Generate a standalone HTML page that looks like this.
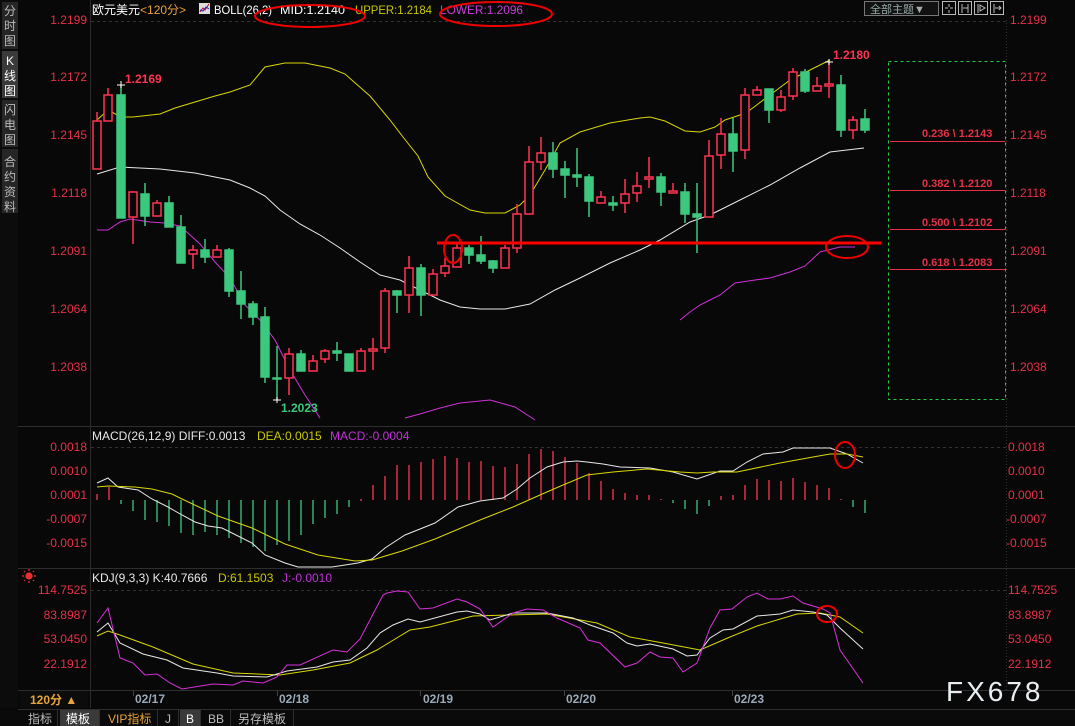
<!DOCTYPE html>
<html><head><meta charset="utf-8"><style>
html,body{margin:0;padding:0;background:#080808;}
svg{display:block;font-family:"Liberation Sans","Noto Sans CJK SC",sans-serif;}
</style></head><body>
<svg width="1075" height="726" viewBox="0 0 1075 726" xmlns="http://www.w3.org/2000/svg">
<rect width="1075" height="726" fill="#080808"/>
<!-- left sidebar -->
<rect x="0" y="0" width="18" height="708" fill="#0c0c0c"/>
<rect x="2" y="2" width="16" height="47" fill="#262626"/>
<rect x="2" y="51" width="16" height="47" fill="#3a3a3a"/>
<rect x="2" y="100" width="16" height="47" fill="#262626"/>
<rect x="2" y="149" width="16" height="64" fill="#262626"/>
<g fill="#bbbbbb" font-size="12" text-anchor="middle">
<text x="10" y="15">分</text><text x="10" y="30">时</text><text x="10" y="45">图</text>
<text x="10" y="65" fill="#ffffff">K</text><text x="10" y="80" fill="#ffffff">线</text><text x="10" y="95" fill="#ffffff">图</text>
<text x="10" y="114">闪</text><text x="10" y="129">电</text><text x="10" y="144">图</text>
<text x="10" y="166">合</text><text x="10" y="181">约</text><text x="10" y="196">资</text><text x="10" y="211">料</text>
</g>
<!-- frame lines -->
<line x1="90.5" y1="0" x2="90.5" y2="708" stroke="#2a2a2a"/>
<line x1="1006.5" y1="20" x2="1006.5" y2="690" stroke="#333" stroke-dasharray="1,2"/>
<line x1="18" y1="426.5" x2="1075" y2="426.5" stroke="#2e2e2e"/>
<line x1="18" y1="568.5" x2="1075" y2="568.5" stroke="#2e2e2e"/>
<line x1="18" y1="690.5" x2="1075" y2="690.5" stroke="#2e2e2e"/>
<line x1="18" y1="709.5" x2="1075" y2="709.5" stroke="#2e2e2e"/>
<line x1="91" y1="21.5" x2="1006" y2="21.5" stroke="#333" stroke-dasharray="3,3"/>
<line x1="91" y1="447.5" x2="1006" y2="447.5" stroke="#333" stroke-dasharray="3,3"/>
<line x1="91" y1="590.5" x2="1006" y2="590.5" stroke="#333" stroke-dasharray="3,3"/>

<!-- header -->
<g font-size="12">
<text x="92" y="14" fill="#ffffff">欧元美元<tspan fill="#e8a33a">&lt;120分&gt;</tspan></text>
<rect x="199" y="3" width="11" height="11" fill="#dddddd"/><polyline points="200,12 203,8 205,10 209,4" stroke="#c00" fill="none"/><polyline points="200,10 203,11 206,7 209,9" stroke="#22c" fill="none"/>
<text x="214" y="14" fill="#ffffff" textLength="58" lengthAdjust="spacingAndGlyphs">BOLL(26,2)</text>
<text x="280" y="14" fill="#ffffff" textLength="65" lengthAdjust="spacingAndGlyphs">MID:1.2140</text>
<text x="355" y="14" fill="#c8c800" textLength="77" lengthAdjust="spacingAndGlyphs">UPPER:1.2184</text>
<text x="440" y="14" fill="#c83cd8" textLength="83" lengthAdjust="spacingAndGlyphs">LOWER:1.2096</text>
</g>
<ellipse cx="310" cy="16" rx="55" ry="11" fill="none" stroke="#e00" stroke-width="2"/>
<ellipse cx="496" cy="14" rx="56" ry="12" fill="none" stroke="#e00" stroke-width="2"/>
<!-- top right buttons -->
<rect x="864.5" y="1.5" width="74" height="14" fill="#111" stroke="#777"/>
<text x="870" y="13" font-size="11" fill="#9aa">全部主题<tspan fill="#aaa">▼</tspan></text>
<g stroke="#bbb" fill="none">
<rect x="942.5" y="1.5" width="13" height="13"/><rect x="958.5" y="1.5" width="13" height="13"/><rect x="974.5" y="1.5" width="13" height="13"/><rect x="990.5" y="1.5" width="13" height="13"/>
<path d="M949 4v3M949 10v3M945 8h3M950 8h3"/>
<path d="M962 4v9M968 4v9M963 8h5"/>
<path d="M978 4v9M980 5l5 3-5 3z"/>
<path d="M994 4v9M995 8h6M999 6l2 2-2 2"/>
</g>

<!-- left axis labels -->
<g font-size="12" fill="#e83048" text-anchor="end">
<text x="87" y="24">1.2199</text><text x="87" y="81">1.2172</text><text x="87" y="139">1.2145</text><text x="87" y="197">1.2118</text><text x="87" y="255">1.2091</text><text x="87" y="313">1.2064</text><text x="87" y="371">1.2038</text>
<text x="87" y="451">0.0018</text><text x="87" y="475">0.0010</text><text x="87" y="499">0.0001</text><text x="87" y="523">-0.0007</text><text x="87" y="547">-0.0015</text>
<text x="87" y="594">114.7525</text><text x="87" y="619">83.8987</text><text x="87" y="643">53.0450</text><text x="87" y="668">22.1912</text>
</g>
<g font-size="12" fill="#e83048">
<text x="1010" y="24">1.2199</text><text x="1010" y="81">1.2172</text><text x="1010" y="139">1.2145</text><text x="1010" y="197">1.2118</text><text x="1010" y="255">1.2091</text><text x="1010" y="313">1.2064</text><text x="1010" y="371">1.2038</text>
<text x="1008" y="451">0.0018</text><text x="1008" y="475">0.0010</text><text x="1008" y="499">0.0001</text><text x="1006" y="523">-0.0007</text><text x="1006" y="547">-0.0015</text>
<text x="1008" y="594">114.7525</text><text x="1008" y="619">83.8987</text><text x="1008" y="643">53.0450</text><text x="1008" y="668">22.1912</text>
</g>

<!-- fib box -->
<rect x="888.5" y="61.5" width="117" height="338" fill="none" stroke="#22cc44" stroke-dasharray="3,3"/>
<g font-size="11" fill="#e83048" font-weight="bold">
<text x="922" y="137">0.236 \ 1.2143</text>
<text x="922" y="187">0.382 \ 1.2120</text>
<text x="922" y="226">0.500 \ 1.2102</text>
<text x="922" y="266">0.618 \ 1.2083</text>
</g>
<g stroke="#e83048"><line x1="890" y1="141.5" x2="1005" y2="141.5"/><line x1="890" y1="190.5" x2="1005" y2="190.5"/><line x1="890" y1="229.5" x2="1005" y2="229.5"/><line x1="890" y1="269.5" x2="1005" y2="269.5"/></g>

<!-- bollinger -->
<polyline fill="none" stroke="#d8d800" points="97,120 108,110 121,117 133,117 160,114 175,108 195,102 215,96 230,92 250,85 265,67 285,63 305,63 330,68 345,74 370,96 390,120 403,137 418,156 428,177 445,196 470,210 485,213 505,213 520,205 530,195 545,170 560,143 580,132 610,123 640,118 650,117 665,121 685,131 700,132 715,127 725,120 740,115 750,110 770,95 790,80 810,70 830,60"/>
<polyline fill="none" stroke="#e8e8e8" points="97,174 120,167 160,169 195,173 230,180 250,188 265,196 280,210 300,224 320,235 340,248 360,262 380,275 400,280 420,290 440,300 460,307 480,309 505,309 530,304 555,290 580,278 610,263 640,250 660,240 690,222 710,215 740,200 770,185 800,168 830,152 864,148"/>
<polyline fill="none" stroke="#d030d8" points="97,230 108,230 120,222 130,219 150,222 165,223 180,226 200,244 215,262 230,278 245,305 260,320 275,340 290,370 305,395 320,418"/>
<polyline fill="none" stroke="#d030d8" points="405,418 420,414 440,408 460,403 490,400 515,407 535,420"/>
<polyline fill="none" stroke="#d030d8" points="680,320 690,312 700,305 710,300 720,295 735,283 755,280 770,278 790,272 805,266 820,252 840,247 855,247"/>

<!-- candles -->
<g stroke-width="1.5">
<g stroke="#ff3452" fill="#080808">
<line x1="97" y1="112" x2="97" y2="169"/><rect x="93" y="121" width="8" height="48"/>
<line x1="108" y1="88" x2="108" y2="121"/><rect x="104" y="95" width="8" height="26"/>
<line x1="133" y1="191" x2="133" y2="244"/><rect x="129" y="192" width="8" height="25"/>
<line x1="157" y1="200" x2="157" y2="216"/><rect x="153" y="203" width="8" height="13"/>
<line x1="193" y1="245" x2="193" y2="269"/><rect x="189" y="250" width="8" height="4"/>
<line x1="217" y1="245" x2="217" y2="257"/><rect x="213" y="250" width="8" height="7"/>
<line x1="289" y1="348" x2="289" y2="395"/><rect x="285" y="354" width="8" height="24"/>
<line x1="313" y1="355" x2="313" y2="371"/><rect x="309" y="361" width="8" height="10"/>
<line x1="325" y1="349" x2="325" y2="363"/><rect x="321" y="351" width="8" height="8"/>
<line x1="361" y1="348" x2="361" y2="371"/><rect x="357" y="351" width="8" height="20"/>
<line x1="373" y1="338" x2="373" y2="370"/><rect x="369" y="349" width="8" height="2"/>
<line x1="385" y1="288" x2="385" y2="353"/><rect x="381" y="291" width="8" height="57"/>
<line x1="409" y1="256" x2="409" y2="313"/><rect x="405" y="268" width="8" height="27"/>
<line x1="433" y1="269" x2="433" y2="295"/><rect x="429" y="274" width="8" height="21"/>
<line x1="445" y1="258" x2="445" y2="277"/><rect x="441" y="266" width="8" height="7"/>
<line x1="457" y1="243" x2="457" y2="267"/><rect x="453" y="248" width="8" height="19"/>
<line x1="505" y1="245" x2="505" y2="268"/><rect x="501" y="248" width="8" height="20"/>
<line x1="517" y1="204" x2="517" y2="253"/><rect x="513" y="214" width="8" height="34"/>
<line x1="529" y1="146" x2="529" y2="214"/><rect x="525" y="162" width="8" height="52"/>
<line x1="541" y1="137" x2="541" y2="170"/><rect x="537" y="153" width="8" height="9"/>
<line x1="601" y1="191" x2="601" y2="203"/><rect x="597" y="197" width="8" height="6"/>
<line x1="625" y1="179" x2="625" y2="213"/><rect x="621" y="194" width="8" height="9"/>
<line x1="637" y1="172" x2="637" y2="202"/><rect x="633" y="186" width="8" height="7"/>
<line x1="649" y1="157" x2="649" y2="188"/><rect x="645" y="177" width="8" height="2"/>
<line x1="673" y1="183" x2="673" y2="193"/><rect x="669" y="191" width="8" height="2"/>
<line x1="709" y1="140" x2="709" y2="217"/><rect x="705" y="156" width="8" height="61"/>
<line x1="721" y1="118" x2="721" y2="169"/><rect x="717" y="134" width="8" height="21"/>
<line x1="745" y1="88" x2="745" y2="159"/><rect x="741" y="95" width="8" height="55"/>
<line x1="757" y1="86" x2="757" y2="95"/><rect x="753" y="90" width="8" height="5"/>
<line x1="781" y1="90" x2="781" y2="112"/><rect x="777" y="97" width="8" height="13"/>
<line x1="793" y1="68" x2="793" y2="100"/><rect x="789" y="72" width="8" height="24"/>
<line x1="817" y1="77" x2="817" y2="91"/><rect x="813" y="86" width="8" height="5"/>
<line x1="829" y1="62" x2="829" y2="98"/><rect x="825" y="84" width="8" height="2"/>
<line x1="853" y1="116" x2="853" y2="139"/><rect x="849" y="120" width="8" height="10"/>
</g>
<g stroke="#3cc87f" fill="#3cc87f">
<line x1="121" y1="85" x2="121" y2="218"/><rect x="117" y="95" width="8" height="123"/>
<line x1="145" y1="183" x2="145" y2="226"/><rect x="141" y="194" width="8" height="22"/>
<line x1="169" y1="196" x2="169" y2="227"/><rect x="165" y="203" width="8" height="24"/>
<line x1="181" y1="215" x2="181" y2="263"/><rect x="177" y="227" width="8" height="36"/>
<line x1="205" y1="239" x2="205" y2="263"/><rect x="201" y="250" width="8" height="7"/>
<line x1="229" y1="248" x2="229" y2="297"/><rect x="225" y="250" width="8" height="41"/>
<line x1="241" y1="271" x2="241" y2="319"/><rect x="237" y="291" width="8" height="13"/>
<line x1="253" y1="301" x2="253" y2="325"/><rect x="249" y="304" width="8" height="13"/>
<line x1="265" y1="307" x2="265" y2="383"/><rect x="261" y="317" width="8" height="60"/>
<line x1="277" y1="346" x2="277" y2="400"/><rect x="273" y="378" width="8" height="1"/>
<line x1="301" y1="350" x2="301" y2="371"/><rect x="297" y="354" width="8" height="17"/>
<line x1="337" y1="342" x2="337" y2="361"/><rect x="333" y="351" width="8" height="2"/>
<line x1="349" y1="354" x2="349" y2="371"/><rect x="345" y="354" width="8" height="17"/>
<line x1="397" y1="290" x2="397" y2="313"/><rect x="393" y="291" width="8" height="4"/>
<line x1="421" y1="264" x2="421" y2="316"/><rect x="417" y="268" width="8" height="27"/>
<line x1="469" y1="245" x2="469" y2="264"/><rect x="465" y="248" width="8" height="7"/>
<line x1="481" y1="236" x2="481" y2="264"/><rect x="477" y="255" width="8" height="6"/>
<line x1="493" y1="260" x2="493" y2="273"/><rect x="489" y="261" width="8" height="7"/>
<line x1="553" y1="142" x2="553" y2="178"/><rect x="549" y="153" width="8" height="16"/>
<line x1="565" y1="161" x2="565" y2="198"/><rect x="561" y="169" width="8" height="6"/>
<line x1="577" y1="148" x2="577" y2="187"/><rect x="573" y="175" width="8" height="2"/>
<line x1="589" y1="174" x2="589" y2="217"/><rect x="585" y="177" width="8" height="24"/>
<line x1="613" y1="196" x2="613" y2="211"/><rect x="609" y="203" width="8" height="2"/>
<line x1="661" y1="173" x2="661" y2="206"/><rect x="657" y="177" width="8" height="15"/>
<line x1="685" y1="183" x2="685" y2="223"/><rect x="681" y="192" width="8" height="22"/>
<line x1="697" y1="183" x2="697" y2="253"/><rect x="693" y="214" width="8" height="3"/>
<line x1="733" y1="118" x2="733" y2="172"/><rect x="729" y="134" width="8" height="17"/>
<line x1="769" y1="89" x2="769" y2="123"/><rect x="765" y="89" width="8" height="21"/>
<line x1="805" y1="69" x2="805" y2="93"/><rect x="801" y="72" width="8" height="19"/>
<line x1="841" y1="75" x2="841" y2="137"/><rect x="837" y="85" width="8" height="45"/>
<line x1="865" y1="109" x2="865" y2="133"/><rect x="861" y="119" width="8" height="11"/>
</g>
</g>
<g stroke="#fff"><path d="M117 85h8M121 81v7M273 400h8M277 397v6M825 62h8M829 59v6"/></g>
<g font-size="12" font-weight="bold">
<text x="125" y="83" fill="#ff3452">1.2169</text>
<text x="281" y="412" fill="#3cc87f">1.2023</text>
<text x="833" y="59" fill="#ff3452">1.2180</text>
</g>
<!-- red support line and circles -->
<line x1="437" y1="243" x2="881" y2="243" stroke="#ff0000" stroke-width="3"/>
<ellipse cx="453" cy="249" rx="9" ry="14" fill="none" stroke="#e00" stroke-width="2"/>
<ellipse cx="847" cy="247" rx="21" ry="11" fill="none" stroke="#e00" stroke-width="2"/>

<!-- MACD -->
<g font-size="12">
<text x="92" y="440" fill="#e8e8e8">MACD(26,12,9) DIFF:0.0013</text>
<text x="257" y="440" fill="#c8c800">DEA:0.0015</text>
<text x="330" y="440" fill="#c030d8">MACD:-0.0004</text>
</g>
<g stroke="#ff3452" stroke-width="1.3">
<path d="M97 494V500M109 487V500M361 499V501M373 485V500M385 476V500M397 465V500M409 465V500M421 462V500M433 459V500M445 456V500M457 458V500M469 462V500M481 461V500M493 466V500M505 467V500M517 464V500M529 454V500M541 449V500M553 451V500M565 457V500M577 463V500M589 473V500M601 481V500M613 489V500M625 493V500M637 495V500M649 495V500M661 499V500M721 496V500M733 495V500M745 485V500M757 479V500M769 480V500M781 481V500M793 478V500M805 482V500M817 485V500M829 488V500M841 499V500"/>
</g>
<g stroke="#3cc87f" stroke-width="1.3">
<path d="M121 500V504M133 500V511M145 500V520M157 500V522M169 500V526M181 500V533M193 500V535M205 500V532M217 500V535M229 500V538M241 500V543M253 500V547M265 500V551M277 500V545M289 500V541M301 500V535M313 500V524M325 500V518M337 500V514M349 500V507M673 500V503M685 500V509M697 500V514M709 500V506M853 500V507M865 500V513"/>
</g>
<polyline fill="none" stroke="#e8e8e8" points="97,483 108,478 118,487 138,490 152,499 168,507 182,515 195,522 208,526 222,528 232,533 252,543 265,555 285,563 298,567 332,567 358,563 372,559 385,548 405,535 435,523 458,507 480,501 503,498 517,489 530,478 547,467 563,462 577,461 587,462 603,464 620,467 650,468 673,472 697,479 720,471 733,471 747,462 763,454 783,452 793,448 830,448 847,454 863,463"/>
<polyline fill="none" stroke="#d8d800" points="97,487 108,486 135,487 152,489 172,494 182,499 218,516 252,528 285,544 318,555 355,561 372,560 402,551 435,539 480,520 513,507 540,495 563,485 587,475 613,472 647,469 680,472 697,473 713,472 737,472 780,463 813,457 830,454 847,454 863,457"/>
<ellipse cx="845" cy="455" rx="10" ry="13" fill="none" stroke="#e00" stroke-width="2"/>

<!-- KDJ -->
<g stroke="#e8302c" stroke-width="1.2"><circle cx="29" cy="576" r="3" fill="#e8302c"/><path d="M29 569v2M29 581v2M22 576h2M34 576h2M24 571l1 1M33 580l1 1M24 581l1-1M33 572l1-1"/></g>
<g font-size="12">
<text x="92" y="582" fill="#e8e8e8">KDJ(9,3,3) K:40.7666</text>
<text x="218" y="582" fill="#c8c800">D:61.1503</text>
<text x="282" y="582" fill="#c030d8">J:-0.0010</text>
</g>
<polyline fill="none" stroke="#d8d800" points="97,636 108,631 120,635 153,647 193,664 233,673 280,675 313,670 350,663 377,650 400,636 410,630 430,627 473,616 547,614 597,623 630,637 663,643 700,650 730,637 757,626 797,614 820,613 840,617 863,633"/>
<polyline fill="none" stroke="#e8e8e8" points="97,632 108,623 120,643 143,654 167,660 183,668 217,673 233,676 267,677 287,671 317,667 333,662 350,660 367,648 380,633 393,625 408,619 420,622 457,612 467,611 480,614 490,620 513,613 547,613 573,618 590,625 613,633 627,643 637,646 650,644 673,649 687,656 697,655 710,638 723,630 733,629 757,616 780,614 793,610 813,612 827,615 840,628 863,649"/>
<polyline fill="none" stroke="#d830d8" points="97,623 108,608 120,658 133,663 145,675 157,674 170,683 182,689 213,684 233,685 243,681 263,683 277,677 287,665 300,665 333,650 347,652 360,639 383,595 387,593 397,591 408,592 420,609 433,608 457,599 467,602 480,609 493,627 513,613 527,609 543,610 557,618 580,628 588,640 600,643 625,667 637,663 650,652 660,657 673,658 683,672 697,663 710,628 720,610 732,609 747,597 757,593 768,599 780,599 793,596 803,603 823,609 830,613 840,650 863,683"/>
<ellipse cx="827" cy="614" rx="10" ry="8" fill="none" stroke="#e00" stroke-width="2"/>

<!-- date axis -->
<g stroke="#444"><path d="M133.5 691v5M277.5 691v5M420.5 691v5M564.5 691v5M732.5 691v5"/></g>
<g font-size="12" font-weight="bold" fill="#9aaab8">
<text x="135" y="703">02/17</text><text x="279" y="703">02/18</text><text x="423" y="703">02/19</text><text x="566" y="703">02/20</text><text x="734" y="703">02/23</text>
</g>
<rect x="20" y="691" width="68" height="17" fill="#0c0c0c"/>
<text x="30" y="704" font-size="12" font-weight="bold" fill="#e8a33a">120分 ▲</text>
<text x="946" y="701" font-size="28" fill="#e8eef2" letter-spacing="3">FX678</text>

<!-- bottom tabs -->
<rect x="0" y="710" width="1075" height="16" fill="#0a0a0a"/>
<rect x="60" y="710" width="39" height="16" fill="#3a3a3a"/>
<rect x="180" y="710" width="20" height="16" fill="#3a3a3a"/>
<g stroke="#2e2e2e"><path d="M57.5 710v16M99.5 710v16M157.5 710v16M178.5 710v16M200.5 710v16M230.5 710v16M293.5 710v16"/></g>
<g font-size="12" fill="#bbbbbb">
<text x="28" y="723">指标</text>
<text x="66" y="723" fill="#ffffff">模板</text>
<text x="108" y="723" fill="#e8a33a">VIP指标</text>
<text x="165" y="723">J</text>
<text x="186" y="723" fill="#ffffff">B</text>
<text x="208" y="723">BB</text>
<text x="238" y="723">另存模板</text>
</g>
</svg>
</body></html>
